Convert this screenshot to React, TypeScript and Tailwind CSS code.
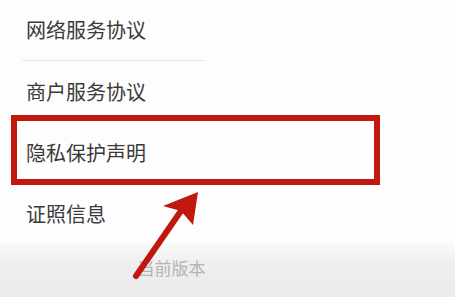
const items = ["网络服务协议", "商户服务协议", "隐私保护声明", "证照信息"];

const App = () => (
  <div
    className="relative flex h-[297px] w-[466px] overflow-hidden bg-white"
    style={{ fontFamily: '"Noto Sans CJK SC", "Noto Sans", sans-serif' }}
  >
    <div className="flex w-[455px] flex-col bg-[#fdfdfd]">
      {items.map((label, i) => (
        <div key={label} className="flex h-[61px] flex-col">
          <div className="flex flex-1 items-center pl-[26px] text-[20px] text-[#3a3a3a]">{label}</div>
          {i === 0 && <div className="ml-[22px] h-px w-[183px] bg-[#e6e6e6]" />}
        </div>
      ))}
      <div className="flex flex-1 items-center justify-center bg-gradient-to-b from-[#f9f9f9] via-[#eeeeee] via-40% to-[#ebebeb] pb-[5px] pr-[112px] text-[17px] text-[#b4b4b4]">
        当前版本
      </div>
    </div>

    {/* highlight box */}
    <div className="absolute left-[11px] top-[115px] h-[70px] w-[369px] border-[6px] border-[#c0170f]" />

    {/* pointer arrow */}
    <svg className="absolute left-0 top-0" width="466" height="297" viewBox="0 0 466 297">
      <line x1="136" y1="276" x2="183" y2="208" stroke="#c0170f" strokeWidth="6" strokeLinecap="round" />
      <polygon points="198,192 163,206 181,211 193,225" fill="#c0170f" />
    </svg>
  </div>
);

export default App;
